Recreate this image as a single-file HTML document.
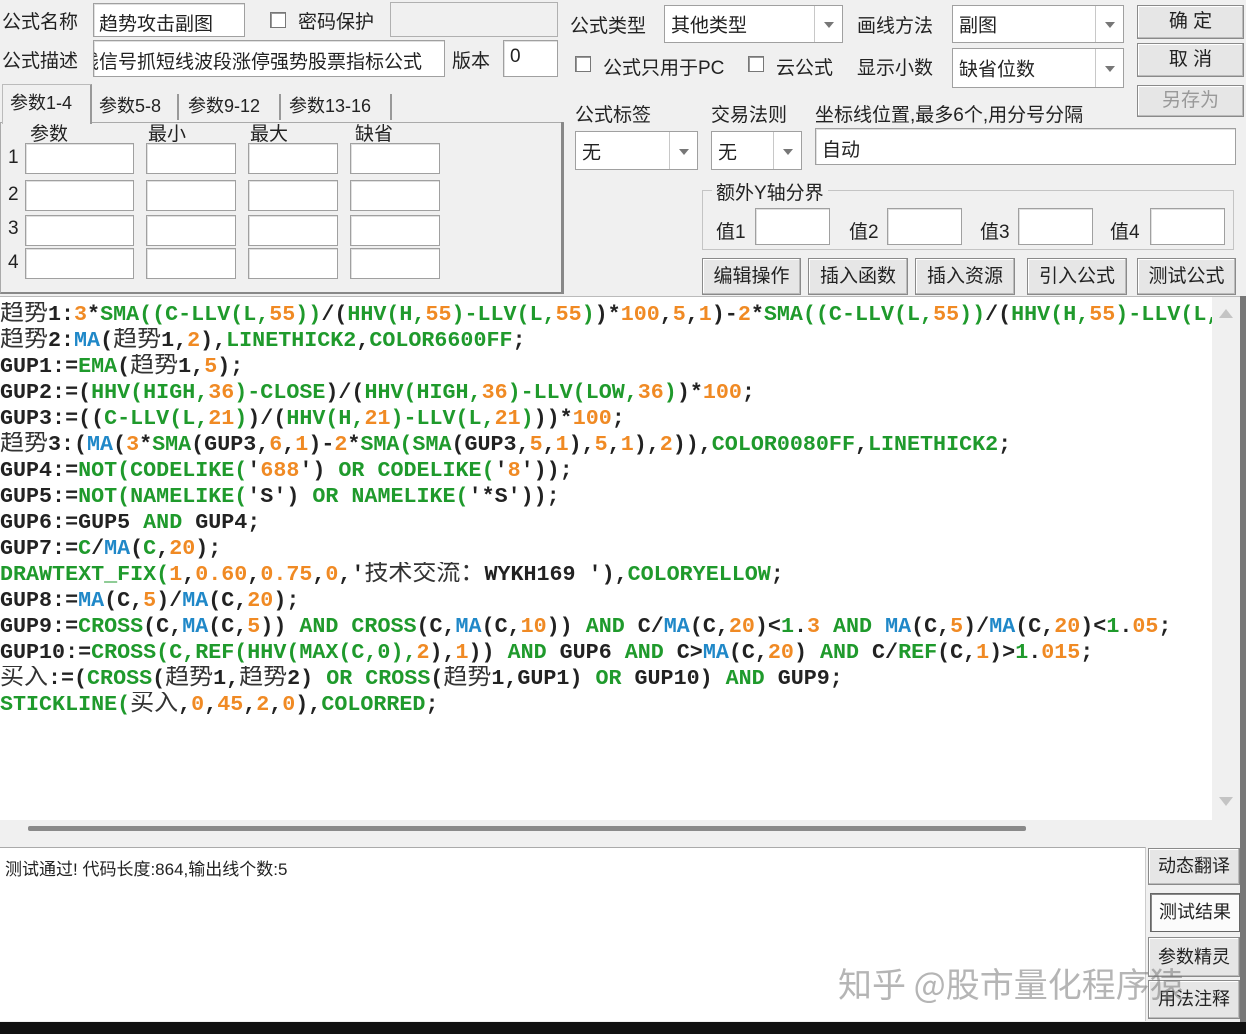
<!DOCTYPE html>
<html><head><meta charset="utf-8"><style>
*{margin:0;padding:0;box-sizing:border-box}
body{width:1246px;height:1034px;background:#f0f0f0;position:relative;overflow:hidden;font-family:"Liberation Sans","Noto Sans CJK SC",sans-serif;font-size:19px;color:#222}
.a{position:absolute;white-space:nowrap}
.in{position:absolute;background:#fff;border:1px solid #a0a0a0;box-shadow:inset 1px 1px 0 #e0e0e0}
.gr{position:absolute;background:#f0f0f0;border:1px solid #b0b0b0}
.sel{position:absolute;background:#fff;border:1px solid #a0a0a0}
.sel .ar{position:absolute;right:0;top:0;bottom:0;width:28px;border-left:1px solid #c8c8c8;background:#fff}
.sel .ar:after{content:"";position:absolute;left:9px;top:50%;margin-top:-2px;border-left:5px solid transparent;border-right:5px solid transparent;border-top:6px solid #777}
.sel span{position:absolute;left:6px;top:50%;transform:translateY(-50%)}
.btn{position:absolute;background:#e6e6e6;border:1px solid #8a8a8a;box-shadow:inset -1px -1px 0 #bbb,inset 1px 1px 0 #fff;text-align:center}
.cb{position:absolute;width:16px;height:16px;background:#fff;border:1px solid #777;box-shadow:inset 1px 1px 0 #999}
#code{position:absolute;left:0;top:297px;width:1212px;height:523px;background:#fff;font-family:"Liberation Mono","Noto Sans CJK SC",monospace;font-weight:bold;font-size:21.7px;color:#222}
#code div{height:26px;line-height:26px;white-space:nowrap;overflow:hidden}
.g{color:#1f9a2c}.o{color:#f08a24}.b{color:#2088c8}
.k{font-family:"Noto Sans CJK SC",sans-serif;font-weight:normal;font-size:24px;color:#333;line-height:0}
</style></head><body>
<div class="a" style="left:2px;top:7px">公式名称</div>
<div class="in" style="left:93px;top:3px;width:152px;height:34px"></div>
<div class="a" style="left:99px;top:9px">趋势攻击副图</div>
<div class="cb" style="left:270px;top:12px"></div>
<div class="a" style="left:298px;top:7px">密码保护</div>
<div class="gr" style="left:390px;top:2px;width:168px;height:35px"></div>
<div class="a" style="left:2px;top:46px">公式描述</div>
<div class="in" style="left:93px;top:40px;width:352px;height:37px;overflow:hidden"><div class="a" style="left:-14px;top:6px">线信号抓短线波段涨停强势股票指标公式</div></div>
<div class="a" style="left:452px;top:46px">版本</div>
<div class="in" style="left:503px;top:40px;width:55px;height:37px"></div>
<div class="a" style="left:510px;top:46px">0</div>
<div class="a" style="left:0;top:122px;width:564px;height:172px;border:1px solid #aaa;border-right:2px solid #888;border-bottom:2px solid #888"></div>
<div class="a" style="left:2px;top:84px;width:90px;height:40px;background:#f0f0f0;border:1px solid #bbb;border-bottom:none;border-right:2px solid #999"></div>
<div class="a" style="left:10px;top:89px;font-size:18px">参数1-4</div>
<div class="a" style="left:99px;top:92px;font-size:18px">参数5-8</div>
<div class="a" style="left:177px;top:94px;width:2px;height:26px;background:#999"></div>
<div class="a" style="left:188px;top:92px;font-size:18px">参数9-12</div>
<div class="a" style="left:279px;top:94px;width:2px;height:26px;background:#999"></div>
<div class="a" style="left:289px;top:92px;font-size:18px">参数13-16</div>
<div class="a" style="left:390px;top:94px;width:2px;height:26px;background:#999"></div>
<div class="a" style="left:30px;top:119px">参数</div>
<div class="a" style="left:148px;top:119px">最小</div>
<div class="a" style="left:250px;top:119px">最大</div>
<div class="a" style="left:355px;top:119px">缺省</div>
<div class="a" style="left:8px;top:147px">1</div><div class="a" style="left:8px;top:184px">2</div><div class="a" style="left:8px;top:218px">3</div><div class="a" style="left:8px;top:252px">4</div>
<div class="in" style="left:25px;top:143px;width:109px;height:31px"></div><div class="in" style="left:146px;top:143px;width:90px;height:31px"></div><div class="in" style="left:248px;top:143px;width:90px;height:31px"></div><div class="in" style="left:350px;top:143px;width:90px;height:31px"></div>
<div class="in" style="left:25px;top:180px;width:109px;height:31px"></div><div class="in" style="left:146px;top:180px;width:90px;height:31px"></div><div class="in" style="left:248px;top:180px;width:90px;height:31px"></div><div class="in" style="left:350px;top:180px;width:90px;height:31px"></div>
<div class="in" style="left:25px;top:215px;width:109px;height:31px"></div><div class="in" style="left:146px;top:215px;width:90px;height:31px"></div><div class="in" style="left:248px;top:215px;width:90px;height:31px"></div><div class="in" style="left:350px;top:215px;width:90px;height:31px"></div>
<div class="in" style="left:25px;top:248px;width:109px;height:31px"></div><div class="in" style="left:146px;top:248px;width:90px;height:31px"></div><div class="in" style="left:248px;top:248px;width:90px;height:31px"></div><div class="in" style="left:350px;top:248px;width:90px;height:31px"></div>
<div class="a" style="left:570px;top:11px">公式类型</div>
<div class="sel" style="left:664px;top:5px;width:179px;height:38px"><span>其他类型</span><div class="ar"></div></div>
<div class="a" style="left:857px;top:11px">画线方法</div>
<div class="sel" style="left:952px;top:5px;width:172px;height:38px"><span>副图</span><div class="ar"></div></div>
<div class="btn" style="left:1137px;top:5px;width:107px;height:34px;line-height:32px">确 定</div>
<div class="btn" style="left:1137px;top:43px;width:107px;height:34px;line-height:32px">取 消</div>
<div class="btn" style="left:1137px;top:85px;width:107px;height:32px;line-height:30px;color:#999">另存为</div>
<div class="cb" style="left:575px;top:56px"></div>
<div class="a" style="left:603px;top:53px">公式只用于PC</div>
<div class="cb" style="left:748px;top:56px"></div>
<div class="a" style="left:776px;top:53px">云公式</div>
<div class="a" style="left:857px;top:53px">显示小数</div>
<div class="sel" style="left:952px;top:48px;width:172px;height:40px"><span>缺省位数</span><div class="ar"></div></div>
<div class="a" style="left:561px;top:122px;width:2px;height:170px;background:#888"></div>
<div class="a" style="left:575px;top:100px">公式标签</div>
<div class="a" style="left:711px;top:100px">交易法则</div>
<div class="a" style="left:815px;top:100px">坐标线位置,最多6个,用分号分隔</div>
<div class="sel" style="left:575px;top:131px;width:123px;height:39px"><span>无</span><div class="ar"></div></div>
<div class="sel" style="left:711px;top:131px;width:91px;height:39px"><span>无</span><div class="ar"></div></div>
<div class="in" style="left:815px;top:128px;width:421px;height:37px"></div>
<div class="a" style="left:822px;top:135px">自动</div>
<div class="a" style="left:702px;top:190px;width:532px;height:60px;border:1px solid #c4c4c4"></div>
<div class="a" style="left:712px;top:178px;background:#f0f0f0;padding:0 4px">额外Y轴分界</div>
<div class="a" style="left:716px;top:217px">值1</div><div class="in" style="left:755px;top:208px;width:75px;height:37px"></div>
<div class="a" style="left:849px;top:217px">值2</div><div class="in" style="left:887px;top:208px;width:75px;height:37px"></div>
<div class="a" style="left:980px;top:217px">值3</div><div class="in" style="left:1018px;top:208px;width:75px;height:37px"></div>
<div class="a" style="left:1110px;top:217px">值4</div><div class="in" style="left:1150px;top:208px;width:75px;height:37px"></div>
<div class="btn" style="left:702px;top:258px;width:99px;height:37px;line-height:35px">编辑操作</div>
<div class="btn" style="left:808px;top:258px;width:100px;height:37px;line-height:35px">插入函数</div>
<div class="btn" style="left:915px;top:258px;width:100px;height:37px;line-height:35px">插入资源</div>
<div class="btn" style="left:1027px;top:258px;width:100px;height:37px;line-height:35px">引入公式</div>
<div class="btn" style="left:1137px;top:258px;width:99px;height:37px;line-height:35px">测试公式</div>
<div class="a" style="left:0;top:296px;width:1241px;height:1px;background:#bbb"></div>
<div id="code"><div style="height:5px"></div>
<div><span class="k">趋势</span>1:<span class="o">3</span>*<span class="g">SMA((C-LLV(L,<span class="o">55</span>))</span>/(<span class="g">HHV(H,<span class="o">55</span>)-LLV(L,<span class="o">55</span>)</span>)*<span class="o">100</span>,<span class="o">5</span>,<span class="o">1</span>)-<span class="o">2</span>*<span class="g">SMA((C-LLV(L,<span class="o">55</span>))</span>/(<span class="g">HHV(H,<span class="o">55</span>)-LLV(L,</span></div>
<div><span class="k">趋势</span>2:<span class="b">MA</span>(<span class="k">趋势</span>1,<span class="o">2</span>),<span class="g">LINETHICK2</span>,<span class="g">COLOR6600FF</span>;</div>
<div>GUP1:=<span class="g">EMA</span>(<span class="k">趋势</span>1,<span class="o">5</span>);</div>
<div>GUP2:=(<span class="g">HHV(HIGH,<span class="o">36</span>)-CLOSE</span>)/(<span class="g">HHV(HIGH,<span class="o">36</span>)-LLV(LOW,<span class="o">36</span>)</span>)*<span class="o">100</span>;</div>
<div>GUP3:=((<span class="g">C-LLV(L,<span class="o">21</span>)</span>)/(<span class="g">HHV(H,<span class="o">21</span>)-LLV(L,<span class="o">21</span>)</span>))*<span class="o">100</span>;</div>
<div><span class="k">趋势</span>3:(<span class="b">MA</span>(<span class="o">3</span>*<span class="g">SMA</span>(GUP3,<span class="o">6</span>,<span class="o">1</span>)-<span class="o">2</span>*<span class="g">SMA(SMA</span>(GUP3,<span class="o">5</span>,<span class="o">1</span>),<span class="o">5</span>,<span class="o">1</span>),<span class="o">2</span>)),<span class="g">COLOR0080FF</span>,<span class="g">LINETHICK2</span>;</div>
<div>GUP4:=<span class="g">NOT(CODELIKE(</span>'<span class="o">688</span>') <span class="g">OR CODELIKE(</span>'<span class="o">8</span>'));</div>
<div>GUP5:=<span class="g">NOT(NAMELIKE(</span>'S') <span class="g">OR NAMELIKE(</span>'*S'));</div>
<div>GUP6:=GUP5 <span class="g">AND</span> GUP4;</div>
<div>GUP7:=<span class="g">C</span>/<span class="b">MA</span>(<span class="g">C</span>,<span class="o">20</span>);</div>
<div><span class="g">DRAWTEXT_FIX(</span><span class="o">1</span>,<span class="o">0.60</span>,<span class="o">0.75</span>,<span class="o">0</span>,'<span class="k">技术交流：</span>WYKH169 '),<span class="g">COLORYELLOW</span>;</div>
<div>GUP8:=<span class="b">MA</span>(C,<span class="o">5</span>)/<span class="b">MA</span>(C,<span class="o">20</span>);</div>
<div>GUP9:=<span class="g">CROSS</span>(C,<span class="b">MA</span>(C,<span class="o">5</span>)) <span class="g">AND CROSS</span>(C,<span class="b">MA</span>(C,<span class="o">10</span>)) <span class="g">AND</span> C/<span class="b">MA</span>(C,<span class="o">20</span>)&lt;<span class="g">1</span>.<span class="o">3</span> <span class="g">AND</span> <span class="b">MA</span>(C,<span class="o">5</span>)/<span class="b">MA</span>(C,<span class="o">20</span>)&lt;<span class="g">1</span>.<span class="o">05</span>;</div>
<div>GUP10:=<span class="g">CROSS(C,REF(HHV(MAX(C,0),</span><span class="o">2</span>),<span class="o">1</span>)) <span class="g">AND</span> GUP6 <span class="g">AND</span> C&gt;<span class="b">MA</span>(C,<span class="o">20</span>) <span class="g">AND</span> C/<span class="g">REF</span>(C,<span class="o">1</span>)&gt;<span class="g">1</span>.<span class="o">015</span>;</div>
<div><span class="k">买入</span>:=(<span class="g">CROSS</span>(<span class="k">趋势</span>1,<span class="k">趋势</span>2) <span class="g">OR CROSS</span>(<span class="k">趋势</span>1,GUP1) <span class="g">OR</span> GUP10) <span class="g">AND</span> GUP9;</div>
<div><span class="g">STICKLINE(</span><span class="k">买入</span>,<span class="o">0</span>,<span class="o">45</span>,<span class="o">2</span>,<span class="o">0</span>),<span class="g">COLORRED</span>;</div>
</div>
<div class="a" style="left:1212px;top:297px;width:28px;height:523px;background:#f0f0f0"></div>
<div class="a" style="left:1219px;top:309px;border-left:7px solid transparent;border-right:7px solid transparent;border-bottom:9px solid #c4c4c4"></div>
<div class="a" style="left:1219px;top:797px;border-left:7px solid transparent;border-right:7px solid transparent;border-top:9px solid #c4c4c4"></div>
<div class="a" style="left:1240px;top:296px;width:6px;height:728px;background:#777"></div>
<div class="a" style="left:28px;top:826px;width:998px;height:5px;background:#8a8a8a;border-radius:2px"></div>
<div class="a" style="left:0;top:847px;width:1146px;height:174px;background:#fff;border-top:1px solid #aaa;border-right:1px solid #ccc"></div>
<div class="a" style="left:5px;top:855px;font-size:17px">测试通过! 代码长度:864,输出线个数:5</div>
<div class="btn" style="left:1148px;top:848px;width:92px;height:37px;line-height:35px;font-size:18px">动态翻译</div>
<div class="btn" style="left:1150px;top:893px;width:90px;height:39px;line-height:37px;font-size:18px;background:#fbfbfb;border-color:#666;box-shadow:inset 1px 1px 0 #888">测试结果</div>
<div class="btn" style="left:1148px;top:937px;width:92px;height:40px;line-height:38px;font-size:18px">参数精灵</div>
<div class="btn" style="left:1148px;top:980px;width:92px;height:39px;line-height:37px;font-size:18px">用法注释</div>
<div class="a" style="left:838px;top:960px;font-size:34px;color:rgba(120,120,120,.55);font-family:'Noto Sans CJK SC',sans-serif;line-height:46px">知乎 @股市量化程序猿</div>
<div class="a" style="left:0;top:1022px;width:1246px;height:12px;background:#111"></div>
</body></html>
